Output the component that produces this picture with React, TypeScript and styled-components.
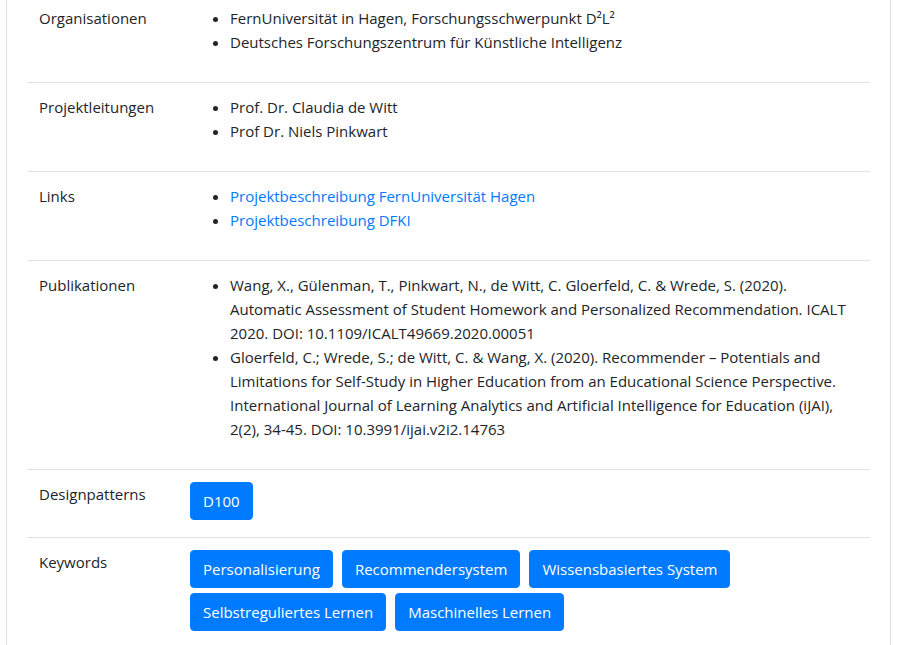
import React from "react";
import styled, { createGlobalStyle } from "styled-components";

const Global = createGlobalStyle`
  html, body { margin: 0; padding: 0; background: #fff; }
  body {
    font-family: "Open Sans", "Noto Sans", sans-serif;
    font-size: 15px;
    line-height: 24px;
    color: #212529;
    overflow: hidden;
  }
`;

const Page = styled.div`
  padding: 0 7px 0 6px;
  margin-top: -8px;
`;

const Card = styled.div`
  border: 1px solid rgba(0, 0, 0, 0.125);
  border-radius: 4px;
  padding: 0 20px 20px;
  background: #fff;
`;

const Row = styled.div`
  display: grid;
  grid-template-columns: 151px 1fr;
  border-top: 1px solid #dee2e6;
`;

const Label = styled.div`
  padding: 12px;
`;

const Value = styled.div`
  padding: 12px;
`;

const List = styled.ul`
  margin: 0 0 16px;
  padding-left: 40px;
`;

const Link = styled.a`
  color: #007bff;
  text-decoration: none;
`;

const Buttons = styled.div`
  display: flex;
  flex-wrap: wrap;
  gap: 5px 9px;
  margin-bottom: 5px;
`;

const Btn = styled.a`
  display: inline-block;
  background: #007bff;
  border: 1px solid #007bff;
  color: #fff;
  padding: 6px 12px;
  border-radius: 4px;
  line-height: 24px;
  text-decoration: none;
`;

const rows: { label: string; items?: string[]; links?: string[]; buttons?: string[] }[] = [
  {
    label: "Organisationen",
    items: [
      "FernUniversität in Hagen, Forschungsschwerpunkt D²L²",
      "Deutsches Forschungszentrum für Künstliche Intelligenz",
    ],
  },
  {
    label: "Projektleitungen",
    items: ["Prof. Dr. Claudia de Witt", "Prof Dr. Niels Pinkwart"],
  },
  {
    label: "Links",
    links: ["Projektbeschreibung FernUniversität Hagen", "Projektbeschreibung DFKI"],
  },
  {
    label: "Publikationen",
    items: [
      "Wang, X., Gülenman, T., Pinkwart, N., de Witt, C. Gloerfeld, C. & Wrede, S. (2020). Automatic Assessment of Student Homework and Personalized Recommendation. ICALT 2020. DOI: 10.1109/ICALT49669.2020.00051",
      "Gloerfeld, C.; Wrede, S.; de Witt, C. & Wang, X. (2020). Recommender – Potentials and Limitations for Self-Study in Higher Education from an Educational Science Perspective. International Journal of Learning Analytics and Artificial Intelligence for Education (iJAI), 2(2), 34-45. DOI: 10.3991/ijai.v2i2.14763",
    ],
  },
  { label: "Designpatterns", buttons: ["D100"] },
  {
    label: "Keywords",
    buttons: [
      "Personalisierung",
      "Recommendersystem",
      "Wissensbasiertes System",
      "Selbstreguliertes Lernen",
      "Maschinelles Lernen",
    ],
  },
];

export default function App() {
  return (
    <>
      <Global />
      <Page>
        <Card>
          {rows.map((r) => (
            <Row key={r.label}>
              <Label>{r.label}</Label>
              <Value>
                {r.items && (
                  <List>
                    {r.items.map((i) => (
                      <li key={i}>{i}</li>
                    ))}
                  </List>
                )}
                {r.links && (
                  <List>
                    {r.links.map((l) => (
                      <li key={l}>
                        <Link href="#">{l}</Link>
                      </li>
                    ))}
                  </List>
                )}
                {r.buttons && (
                  <Buttons>
                    {r.buttons.map((b) => (
                      <Btn key={b} href="#">
                        {b}
                      </Btn>
                    ))}
                  </Buttons>
                )}
              </Value>
            </Row>
          ))}
        </Card>
      </Page>
    </>
  );
}
